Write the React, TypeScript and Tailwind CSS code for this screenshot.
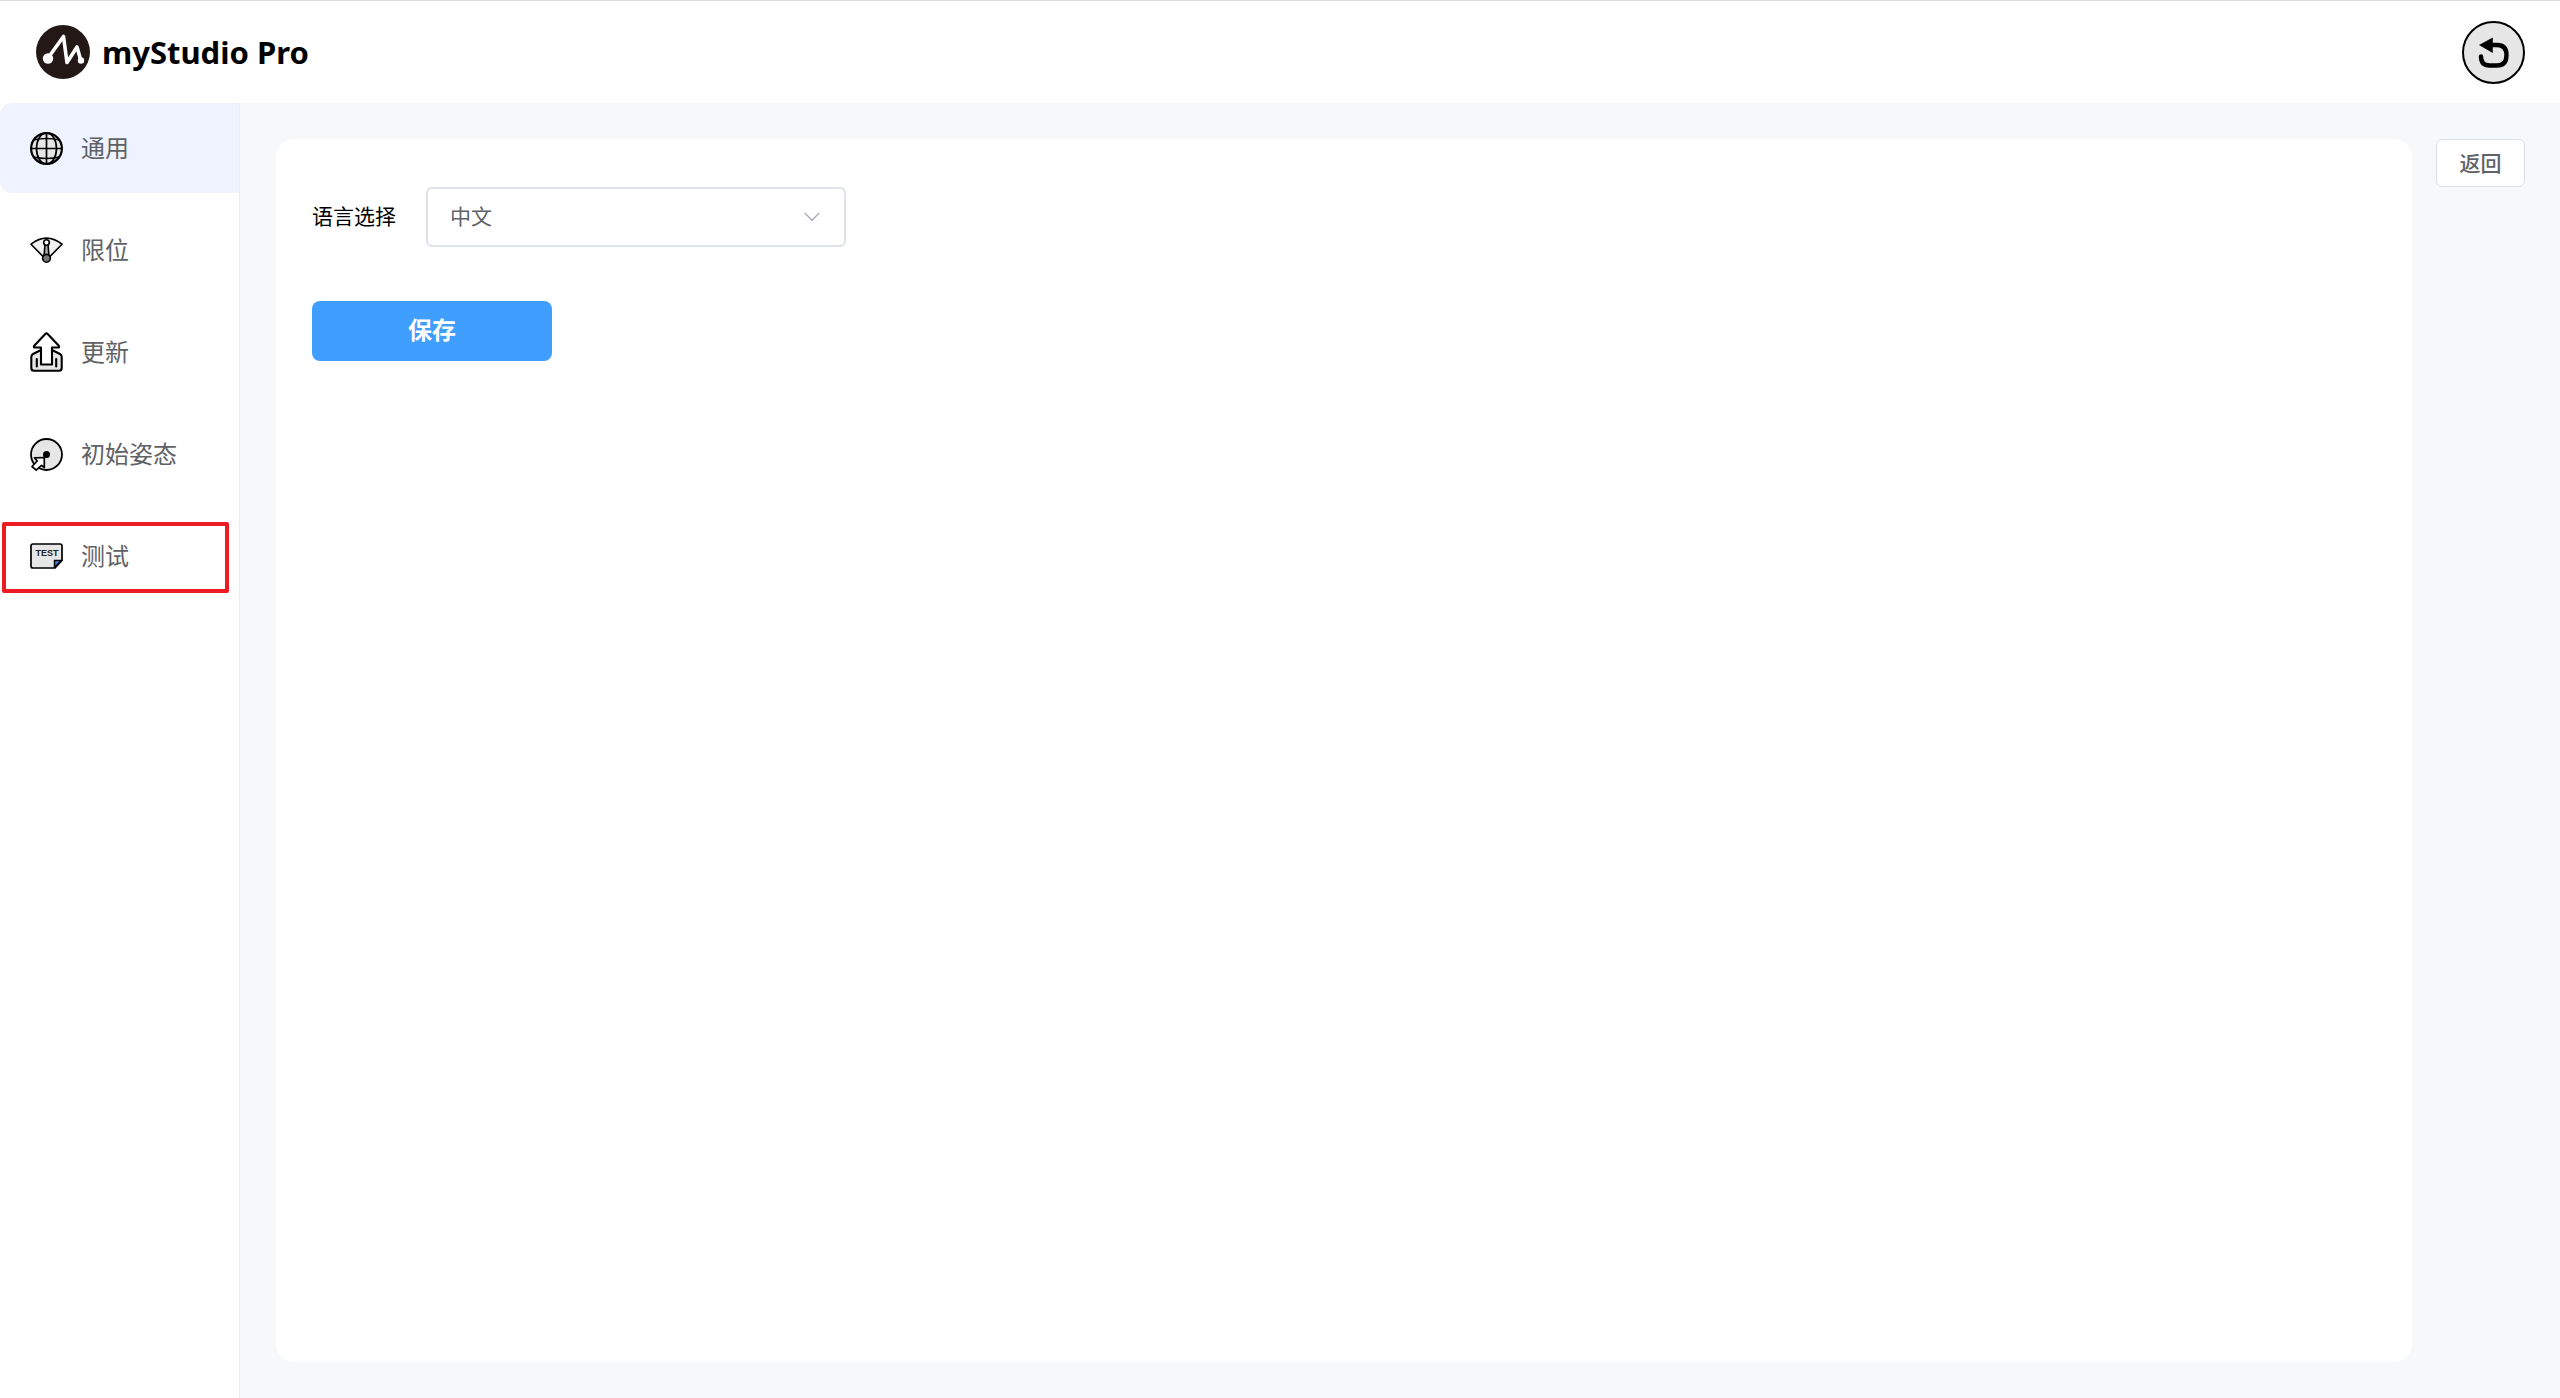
import { useState } from "react";
import type { ReactNode } from "react";

function LogoIcon() {
  return (
    <svg width="54" height="54" viewBox="0 0 54 54" aria-hidden="true">
      <circle cx="27" cy="27" r="27" fill="#231815" />
      <path
        d="M12 33 L27.5 11.5 L31 37.5 L41 22 L45 36"
        fill="none"
        stroke="#fff"
        strokeWidth="3.6"
        strokeLinecap="round"
        strokeLinejoin="round"
      />
      <circle cx="12" cy="33.5" r="5.2" fill="#fff" />
      <circle cx="45" cy="35.5" r="3.2" fill="#fff" />
    </svg>
  );
}

function UndoIcon() {
  return (
    <svg width="63" height="63" viewBox="0 0 63 63" aria-hidden="true">
      <circle cx="31.5" cy="31.5" r="30.5" fill="#e6e6e6" stroke="#000" strokeWidth="2" />
      <path d="M30.5 17 V31.5 L17.5 24 Z" fill="#000" stroke="#000" strokeWidth="0.6" strokeLinejoin="round" />
      <path
        d="M28 24 H35 Q44.5 24 44.5 34 Q44.5 44.5 35 44.5 H27.5 Q19 44.5 19 35.5"
        fill="none"
        stroke="#000"
        strokeWidth="4.4"
        strokeLinecap="round"
      />
    </svg>
  );
}

function GlobeIcon() {
  return (
    <svg width="33" height="33" viewBox="0 0 33 33" aria-hidden="true">
      <circle cx="16.5" cy="16.5" r="15.5" fill="#e6e6e6" />
      <g fill="none" stroke="#000" strokeWidth="1.7">
        <circle cx="16.5" cy="16.5" r="15.4" strokeWidth="2.2" />
        <ellipse cx="16.5" cy="16.5" rx="10" ry="15.5" />
        <path d="M16.5 1 V32 M1 16.5 H32" />
        <path d="M3.5 8 Q16.5 5 29.5 8 M3.5 25 Q16.5 28 29.5 25" />
      </g>
    </svg>
  );
}

function LimitIcon() {
  return (
    <svg width="33" height="26" viewBox="0 0 33 26" aria-hidden="true">
      <path d="M1 7.2 Q16.5 -5 32 7.2 L17.5 22 H15.5 Z" fill="#f0f0f0" stroke="#000" strokeWidth="1.6" strokeLinejoin="round" />
      <path d="M15 7.5 H18 L19 19 H14 Z" fill="#aaa" stroke="#000" strokeWidth="1.6" />
      <circle cx="16.5" cy="5.5" r="2.8" fill="#fff" stroke="#000" strokeWidth="1.6" />
      <circle cx="16.5" cy="21.3" r="3.9" fill="#777" stroke="#000" strokeWidth="1.6" />
    </svg>
  );
}

function UpdateIcon() {
  return (
    <svg width="33" height="40" viewBox="0 0 33 40" aria-hidden="true">
      <g stroke="#000" strokeWidth="2.1" strokeLinejoin="round" strokeLinecap="round">
        <path
          d="M10 18.5 L3 22 Q1.3 23 1.3 25 V36 Q1.3 38.8 4 38.8 H29 Q31.7 38.8 31.7 36 V25 Q31.7 23 30 22 L23 18.5 Z"
          fill="#e6e6e6"
        />
        <path d="M6.8 27 V34.5 M26.2 27 V34.5" />
        <path
          d="M11 32.5 V15.5 H4.5 Q3.5 15.3 4.2 13.8 L15.3 2 Q16.5 0.7 17.7 2 L28.8 13.8 Q29.5 15.3 28.5 15.5 H22 V32.5 Z"
          fill="#fff"
        />
      </g>
    </svg>
  );
}

function PoseIcon() {
  return (
    <svg width="33" height="33" viewBox="0 0 33 33" aria-hidden="true">
      <circle cx="16.5" cy="16.5" r="15.5" fill="#e6e6e6" stroke="#000" strokeWidth="1.8" />
      <circle cx="16.5" cy="16.5" r="3.5" fill="#000" />
      <path
        d="M4.5 19.8 L14.3 19.5 V29.5 L11.5 27.3 L6.2 32.2 L2 28.5 L7.2 23 Z"
        fill="#fff"
        stroke="#000"
        strokeWidth="1.7"
        strokeLinejoin="round"
      />
    </svg>
  );
}

function TestIcon() {
  return (
    <svg width="33" height="26" viewBox="0 0 33 26" aria-hidden="true">
      <path
        d="M3 1 H30 Q32 1 32 3 V17.5 L25 25 H3 Q1 25 1 23 V3 Q1 1 3 1 Z"
        fill="#e6e6e6"
        stroke="#000"
        strokeWidth="1.7"
      />
      <path d="M31.5 17.5 H24.5 V24.5 Z" fill="#3e7be0" stroke="#000" strokeWidth="1.5" strokeLinejoin="round" />
      <text x="17" y="12.5" fontSize="9" fontWeight="700" textAnchor="middle" fontFamily="Liberation Sans, sans-serif" fill="#222">
        TEST
      </text>
    </svg>
  );
}

const items: { label: string; icon: ReactNode; marked?: boolean }[] = [
  { label: "通用", icon: <GlobeIcon /> },
  { label: "限位", icon: <LimitIcon /> },
  { label: "更新", icon: <UpdateIcon /> },
  { label: "初始姿态", icon: <PoseIcon /> },
  { label: "测试", icon: <TestIcon />, marked: true },
];

export default function App() {
  const [active, setActive] = useState(0);

  return (
    <div className="flex min-h-screen flex-col bg-[#f6f8fa] font-['Noto_Sans_CJK_SC',sans-serif]">
      <header className="flex h-[103px] items-center justify-between border-t border-[#dddddd] bg-white px-9">
        <div className="flex items-center gap-3">
          <LogoIcon />
          <h1 className="font-['Noto_Sans',sans-serif] text-[31px] leading-10 font-bold text-black">myStudio Pro</h1>
        </div>
        <button type="button" aria-label="撤销" className="-mr-px">
          <UndoIcon />
        </button>
      </header>

      <div className="flex flex-1">
        <nav className="flex w-60 shrink-0 flex-col gap-3 border-r border-[#ebedf0] bg-white">
          {items.map((item, i) => (
            <button
              key={item.label}
              type="button"
              onClick={() => setActive(i)}
              className={
                "relative flex h-[90px] items-center gap-[18px] rounded-l-xl pl-[30px] text-2xl text-[#606266] " +
                (i === active ? "bg-[#eff3ff]" : "bg-white")
              }
            >
              {item.icon}
              <span className="pb-0.5">{item.label}</span>
              {item.marked && (
                <span className="pointer-events-none absolute top-[11px] right-2.5 bottom-2 left-0.5 rounded-xs border-4 border-[#ed1c24]" />
              )}
            </button>
          ))}
        </nav>

        <main className="flex flex-1 items-start gap-6 py-9 pr-[35px] pl-9">
          <section className="flex-1 self-stretch rounded-[18px] bg-white px-9 py-12">
            <div className="flex items-center gap-[30px]">
              <label htmlFor="language" className="pb-0.5 text-[21px] text-black">
                语言选择
              </label>
              <div className="relative">
                <select
                  id="language"
                  className="h-[60px] w-[420px] appearance-none rounded-md border-2 border-[#dfe2e9] bg-white px-[22px] pb-0.5 text-[21px] text-[#606266]"
                >
                  <option>中文</option>
                </select>
                <svg
                  className="pointer-events-none absolute top-[25px] right-[26px]"
                  width="16"
                  height="10"
                  viewBox="0 0 16 10"
                  aria-hidden="true"
                >
                  <path d="M0.8 1 L8 8.3 L15.2 1" fill="none" stroke="#a8abb2" strokeWidth="1.3" />
                </svg>
              </div>
            </div>
            <button type="button" className="mt-[54px] h-[60px] w-60 rounded-lg bg-[#409eff] pb-1 text-2xl font-bold text-white">
              保存
            </button>
          </section>
          <button
            type="button"
            className="h-12 w-[89px] rounded-md border border-[#dcdfe6] bg-white text-[21px] font-medium text-[#606266]"
          >
            返回
          </button>
        </main>
      </div>
    </div>
  );
}
